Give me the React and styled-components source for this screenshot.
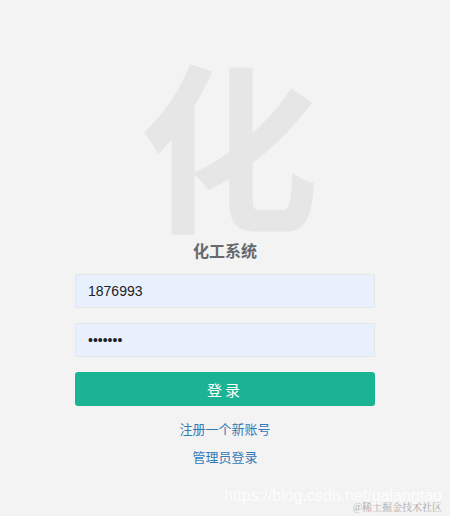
import React, { useState } from "react";
import styled, { createGlobalStyle } from "styled-components";

const GlobalStyle = createGlobalStyle`
  html, body {
    margin: 0;
    padding: 0;
    background-color: #f3f3f3;
    font-family: "Liberation Sans", "Noto Sans CJK SC", sans-serif;
  }
`;

const Page = styled.div`
  position: relative;
  width: 450px;
  height: 516px;
  overflow: hidden;
  display: flex;
  justify-content: center;
`;

const LoginBox = styled.div`
  width: 300px;
  display: flex;
  flex-direction: column;
  align-items: center;
  padding-top: 60px;
`;

// big faded character used as the logo
const Logo = styled.h1`
  margin: 0 0 20px 8px;
  font-family: "Noto Sans CJK SC", sans-serif;
  font-size: 180px;
  font-weight: 700;
  line-height: 160px;
  color: #e6e6e6;
`;

const Title = styled.h3`
  margin: 0 0 14px;
  font-family: "Noto Sans CJK SC", sans-serif;
  font-size: 16px;
  font-weight: 700;
  line-height: 20px;
  color: #676a6c;
`;

const Form = styled.form`
  width: 100%;
  display: flex;
  flex-direction: column;
`;

const Input = styled.input`
  box-sizing: border-box;
  width: 100%;
  height: 34px;
  margin-bottom: 15px;
  padding: 6px 12px;
  border: 1px solid #e5e6e7;
  border-radius: 1px;
  background-color: #e8f0fe;
  color: #222;
  font-family: "Liberation Sans", sans-serif;
  font-size: 14px;
  outline: none;
`;

const Button = styled.button`
  height: 34px;
  border: none;
  border-radius: 3px;
  background-color: #1ab394;
  color: #fff;
  font-family: "Noto Sans CJK SC", sans-serif;
  font-size: 15px;
  letter-spacing: 3px;
  cursor: pointer;
`;

const LinkText = styled.a`
  display: block;
  margin-top: ${(p) => p.$gap}px;
  font-family: "Noto Sans CJK SC", sans-serif;
  font-size: 13px;
  line-height: 18px;
  color: #337ab7;
  text-decoration: none;
`;

const Watermark = styled.div`
  position: absolute;
  right: 8px;
  bottom: 3px;
  text-align: right;
`;

const WaterUrl = styled.div`
  font-family: "Liberation Sans", sans-serif;
  font-size: 16px;
  line-height: 18px;
  color: #ffffff;
  opacity: 0.85;
`;

const WaterSite = styled.div`
  margin-top: -4px;
  font-family: "Noto Serif CJK SC", "Noto Sans CJK SC", serif;
  font-size: 10px;
  line-height: 12px;
  color: #a8a8a8;
`;

const App = () => {
  const [form, setForm] = useState({ username: "1876993", password: "1234567" });

  const handleChange = (e) => {
    const { name, value } = e.target;
    setForm({ ...form, [name]: value });
  };

  return (
    <Page>
      <GlobalStyle />
      <LoginBox>
        <Logo>化</Logo>
        <Title>化工系统</Title>
        <Form onSubmit={(e) => e.preventDefault()}>
          <Input type="text" name="username" value={form.username} onChange={handleChange} />
          <Input type="password" name="password" value={form.password} onChange={handleChange} />
          <Button type="submit">登录</Button>
        </Form>
        <LinkText href="#" $gap={14}>注册一个新账号</LinkText>
        <LinkText href="#" $gap={10}>管理员登录</LinkText>
      </LoginBox>
      <Watermark>
        <WaterUrl>https://blog.csdn.net/galangtao</WaterUrl>
        <WaterSite>@稀土掘金技术社区</WaterSite>
      </Watermark>
    </Page>
  );
};

export default App;
